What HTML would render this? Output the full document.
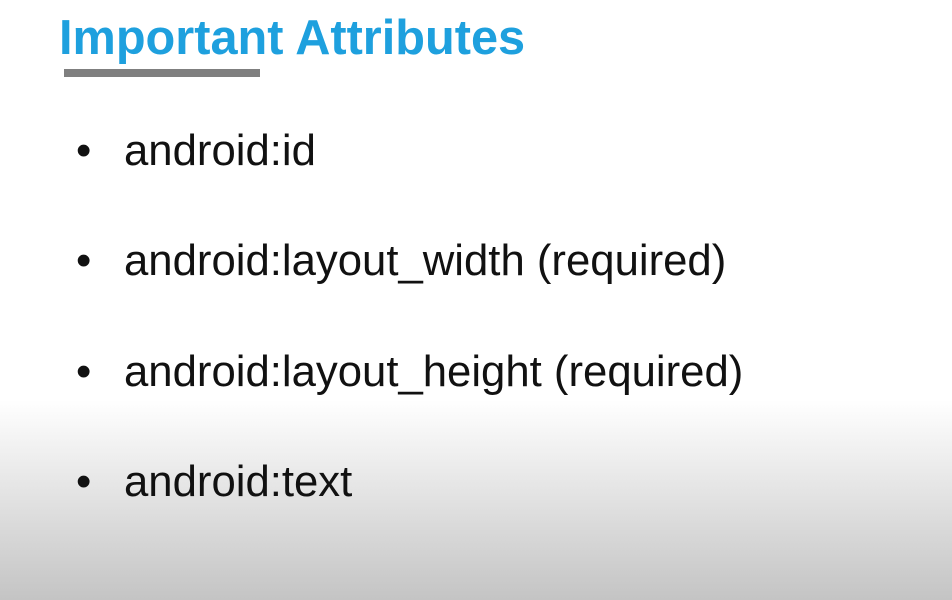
<!DOCTYPE html>
<html><head><style>
html,body{margin:0;padding:0}
body{width:952px;height:600px;position:relative;overflow:hidden;font-family:"Liberation Sans",sans-serif;
background:linear-gradient(to bottom,#fff 0px,#fff 400px,#c4c4c4 600px);}
.t{position:absolute;left:59px;top:8px;font-size:48.7px;font-weight:bold;color:#1ea0de;line-height:60px;white-space:nowrap}
.u{position:absolute;left:64px;top:69px;width:196px;height:8px;background:#7f7f7f}
.b{position:absolute;left:76px;font-size:43.7px;color:#111;line-height:50px;white-space:nowrap}
.b span{position:absolute;left:48px}
</style></head><body>
<div class="t">Important Attributes</div>
<div class="u"></div>
<div class="b" style="top:126px">•<span>android:id</span></div>
<div class="b" style="top:236px">•<span>android:layout_width (required)</span></div>
<div class="b" style="top:347px">•<span>android:layout_height (required)</span></div>
<div class="b" style="top:457px">•<span>android:text</span></div>
</body></html>
